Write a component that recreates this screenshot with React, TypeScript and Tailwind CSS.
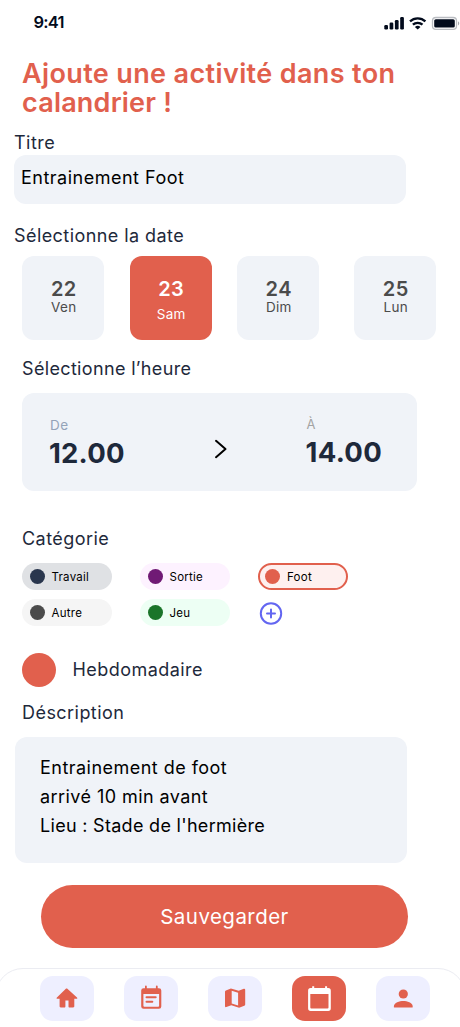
import type { ReactNode } from "react";

const days = [
  { n: "22", d: "Ven", gap: "" },
  { n: "23", d: "Sam", gap: "ml-[25.5px]", active: true },
  { n: "24", d: "Dim", gap: "ml-[25.5px]" },
  { n: "25", d: "Lun", gap: "ml-[35px]" },
];

const Label = ({ className, children }: { className: string; children: ReactNode }) => (
  <h2 className={`h-6 text-[18px] leading-6 text-[#1e293b] ${className}`}>{children}</h2>
);

const Chip = ({ label, dot, box }: { label: string; dot: string; box: string }) => (
  <button className={`flex h-[27px] w-[90px] items-center rounded-full text-[11.5px] tracking-[0.25px] text-black ${box}`}>
    <span className={`mr-[7px] size-[15px] rounded-full ${dot}`} />
    <span className="pt-[2px]">{label}</span>
  </button>
);

const Tab = ({ active, children }: { active?: boolean; children: ReactNode }) => (
  <button className={`flex h-[45px] w-[54px] items-center justify-center rounded-[13px] ${active ? "bg-[#e1604d]" : "bg-[#eeefff]"}`}>
    <svg viewBox="0 0 54 45" className="h-[45px] w-[54px]" fill={active ? "#fff" : "#e1604d"}>
      {children}
    </svg>
  </button>
);

export default function App() {
  return (
    <main className="flex h-[1027px] w-[460px] flex-col overflow-hidden bg-white font-['Inter',sans-serif]">
      <header className="flex h-[59px] shrink-0 items-start justify-between pl-[33.5px] pt-[12px]">
        <span className="text-[16.5px] font-semibold leading-[21px] tracking-[-0.8px] text-[#020b1c]">9:41</span>
        <svg viewBox="0 0 76 21" className="h-[21px] w-[76px]" fill="#020b1c">
          <rect x="0.3" y="13" width="3.7" height="4.5" rx="1.2" />
          <rect x="5.6" y="10.6" width="3.7" height="6.9" rx="1.2" />
          <rect x="10.9" y="8" width="3.7" height="9.5" rx="1.2" />
          <rect x="16.2" y="5" width="3.7" height="12.5" rx="1.2" />
          <g fill="none" stroke="#020b1c" strokeWidth="2.3">
            <path d="M26 9.4a11.2 11.2 0 0 1 15.4 0" />
            <path d="M28.9 12.7a7 7 0 0 1 9.6 0" />
          </g>
          <path d="M30.9 14.9a4.3 4.3 0 0 1 5.6 0l-2.8 2.6z" />
          <rect x="48.5" y="5.5" width="24" height="11.8" rx="3.4" fill="none" stroke="#babdc2" strokeWidth="1.3" />
          <rect x="50.2" y="7.2" width="20.6" height="8.4" rx="1.6" />
          <path d="M74 9.3c1.7.9 1.7 3.2 0 4.1z" fill="#a5a8ae" />
        </svg>
      </header>

      <h1 className="ml-[22px] h-[58px] shrink-0 whitespace-nowrap text-[27px] font-semibold leading-[29px] text-[#e1604d]">
        <span className="tracking-[0.37px]">Ajoute une activité dans ton</span>
        <br />
        <span className="tracking-[0.2px]">calandrier !</span>
      </h1>

      <Label className="ml-[14px] mt-[13.5px] shrink-0 tracking-[0.5px]">Titre</Label>
      <div className="ml-[14px] flex h-[49px] w-[392px] shrink-0 rounded-xl bg-[#f0f3f8] pl-[7px] pt-[11px] text-[18px] leading-6 tracking-[0.5px] text-black">
        Entrainement Foot
      </div>

      <Label className="ml-[14px] mt-[20px] shrink-0 tracking-[0.43px]">Sélectionne la date</Label>
      <div className="ml-[22px] mt-[8px] flex h-[84px] shrink-0">
        {days.map(({ n, d, gap, active }) => (
          <button key={n} className={`flex w-[82px] flex-col items-center rounded-xl pl-[1.5px] pt-[21px] ${gap} ${active ? "bg-[#e1604d] text-white" : "bg-[#f0f3f8] text-[#4b4b4b]"}`}>
            <span className="h-6 text-[20px] font-semibold leading-6 tracking-[0.4px]">{n}</span>
            <span className={`text-[13.5px] leading-4 tracking-[0.3px] ${active ? "mt-[5.5px]" : "-mt-[2px]"}`}>{d}</span>
          </button>
        ))}
      </div>

      <Label className="ml-[22px] mt-[17px] shrink-0 tracking-[0.34px]">Sélectionne l’heure</Label>
      <section className="ml-[22px] mt-[12px] flex h-[98.5px] w-[395px] shrink-0 rounded-xl bg-[#f0f3f8] pl-[28px]">
        <div className="w-[164px] pt-[24px]">
          <p className="h-4 text-[13.5px] leading-4 tracking-[0.4px] text-[#94a3b8]">De</p>
          <p className="-ml-px mt-[4.5px] text-[27.5px] font-bold leading-8 tracking-[0.2px] text-[#1e293b]">12.00</p>
        </div>
        <svg viewBox="0 0 14 22" className="mt-[45px] h-[22px] w-[14px]" fill="none" stroke="#000" strokeWidth="2" strokeLinecap="round" strokeLinejoin="round">
          <path d="M2 2.8l9.5 8.2L2 19.2" />
        </svg>
        <div className="ml-[77.5px] pt-[23px]">
          <p className="ml-[1px] h-4 text-[13px] leading-4 text-[#a3a3a3]">À</p>
          <p className="mt-[4.5px] text-[27.5px] font-bold leading-8 tracking-[0.3px] text-[#1e293b]">14.00</p>
        </div>
      </section>

      <Label className="ml-[22px] mt-[35.5px] shrink-0 tracking-[0.45px]">Catégorie</Label>
      <div className="ml-[22px] mt-[12.5px] grid shrink-0 grid-cols-[118px_118px_90px] gap-y-[9px]">
        <Chip label="Travail" dot="bg-[#29364d]" box="bg-[#dfe1e4] pl-[7.5px]" />
        <Chip label="Sortie" dot="bg-[#701a75]" box="bg-[#fdf2ff] pl-[7.5px]" />
        <Chip label="Foot" dot="bg-[#e1604d]" box="border-2 border-[#e1604d] bg-[#fef0ef] pl-[5.5px] -ml-[0.5px]" />
        <Chip label="Autre" dot="bg-[#4b4b4b]" box="bg-[#f5f5f5] pl-[7.5px]" />
        <Chip label="Jeu" dot="bg-[#1b752a]" box="bg-[#edfff4] pl-[7.5px]" />
        <svg viewBox="0 0 26 27" className="h-[27px] w-[26px]" fill="none" stroke="#6366f1" strokeWidth="2" strokeLinecap="round">
          <circle cx="13" cy="14.5" r="10.2" />
          <path d="M13 10.5v8M9 14.5h8" />
        </svg>
      </div>

      <div className="ml-[22px] mt-[26.5px] flex h-[34px] shrink-0 items-center">
        <span className="size-[34px] rounded-full bg-[#e1604d]" />
        <Label className="ml-[16.5px] tracking-[0.45px]">Hebdomadaire</Label>
      </div>

      <Label className="ml-[22px] mt-[14px] shrink-0 tracking-[0.45px]">Déscription</Label>
      <div className="ml-[15px] mt-[12.5px] h-[125.5px] w-[392px] shrink-0 rounded-xl bg-[#f0f3f8] pl-[25px] pt-[16px] text-[18px] leading-[29px] text-black">
        <p className="tracking-[0.47px]">Entrainement de foot</p>
        <p className="tracking-[0.43px]">arrivé 10 min avant</p>
        <p className="tracking-[0.3px]">Lieu : Stade de l'hermière</p>
      </div>

      <button className="ml-[41px] mt-[22.5px] h-[63px] w-[367px] shrink-0 rounded-full bg-[#e1604d] pt-px text-[20.5px] tracking-[0.45px] text-white">
        Sauvegarder
      </button>

      <nav className="-ml-[5px] mt-[20px] flex h-[70px] w-[471px] shrink-0 gap-[30px] rounded-t-[28px] border border-[#ebecf2] bg-white pl-[44px] pt-[7px]">
        <Tab>
          <path d="M27.1 12.6 37 21.4c.6.6.3 1.3-.5 1.3h-2.2v7.6c0 .7-.4 1.1-1.1 1.1h-3.7c-.6 0-1-.4-1-1v-5.8h-3.1v5.8c0 .6-.4 1-1 1h-3.7c-.7 0-1.1-.4-1.1-1.1v-7.6h-2.2c-.8 0-1.1-.7-.5-1.3l9.2-8.8c.3-.3.7-.3 1 0z" />
        </Tab>
        <Tab>
          <path fillRule="evenodd" d="M21 10.5v1.7h-1.4a2.4 2.4 0 0 0-2.4 2.4v15.8a2.4 2.4 0 0 0 2.4 2.4h15.3a2.4 2.4 0 0 0 2.4-2.4V14.6a2.4 2.4 0 0 0-2.4-2.4h-1.2v-1.7a.9.9 0 0 0-1.8 0v1.7h-9.1v-1.7a.9.9 0 0 0-1.8 0zM19.4 18.1h15.7v11.7a1 1 0 0 1-1 1H20.4a1 1 0 0 1-1-1z" />
          <rect x="21.5" y="20.2" width="11.2" height="2" rx="1" />
          <rect x="21.5" y="24.7" width="7.8" height="2" rx="1" />
        </Tab>
        <Tab>
          <path fillRule="evenodd" d="M17 15.7c0-.7.3-1.1.9-1.3l5-1.9 7.8 2.2 5.1-1.9c.8-.2 1.4.1 1.4.9v14.8c0 .7-.3 1.1-.9 1.3l-5.2 2-7.8-2.6-5 1.9c-.7.2-1.3-.1-1.3-.9zM23.7 14.8v12.7l6.4 2.1V16.8z" />
        </Tab>
        <Tab active>
          <path fillRule="evenodd" d="M20.2 10.2v1.9h-1.4a2.6 2.6 0 0 0-2.7 2.6v17.6a2.6 2.6 0 0 0 2.7 2.6h17.3a2.6 2.6 0 0 0 2.7-2.6V14.7a2.6 2.6 0 0 0-2.7-2.6h-1v-1.9h-2v1.9H22.2v-1.9zM18.3 18h18.2v13.6a1 1 0 0 1-1 1H19.3a1 1 0 0 1-1-1z" />
        </Tab>
        <Tab>
          <circle cx="27.3" cy="18" r="4.6" />
          <path d="M17.9 31.3v-1.1c0-3.7 5.7-5.3 9.4-5.3s9.4 1.6 9.4 5.3v.7c0 .3-.3.6-.7.6H18.3z" />
        </Tab>
      </nav>
    </main>
  );
}
